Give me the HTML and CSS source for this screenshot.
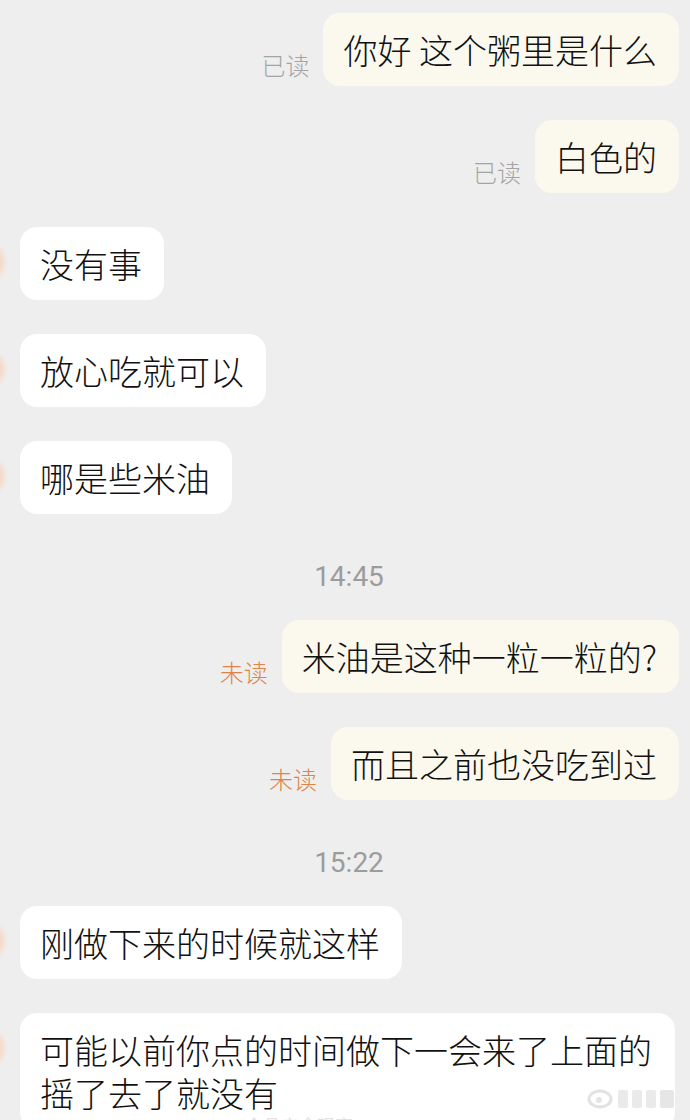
FILE: index.html
```html
<!DOCTYPE html>
<html lang="zh-CN">
<head>
<meta charset="utf-8">
<title>聊天</title>
<link rel="stylesheet" href="styles.css">
</head>
<body>
<div class="chat">
  <div class="row mine">
    <span class="status read">已读</span>
    <div class="bubble cream">你好 这个粥里是什么</div>
  </div>
  <div class="row mine">
    <span class="status read">已读</span>
    <div class="bubble cream">白色的</div>
  </div>
  <div class="row theirs">
    <span class="avatar"></span>
    <div class="bubble white">没有事</div>
  </div>
  <div class="row theirs">
    <span class="avatar"></span>
    <div class="bubble white">放心吃就可以</div>
  </div>
  <div class="row theirs">
    <span class="avatar"></span>
    <div class="bubble white">哪是些米油</div>
  </div>
  <div class="time">14:45</div>
  <div class="row mine after-time">
    <span class="status unread">未读</span>
    <div class="bubble cream">米油是这种一粒一粒的?</div>
  </div>
  <div class="row mine">
    <span class="status unread">未读</span>
    <div class="bubble cream">而且之前也没吃到过</div>
  </div>
  <div class="time">15:22</div>
  <div class="row theirs after-time">
    <span class="avatar"></span>
    <div class="bubble white">刚做下来的时候就这样</div>
  </div>
  <div class="row theirs">
    <span class="avatar"></span>
    <div class="bubble white">可能以前你点的时间做下一会来了上面的摇了去了就没有</div>
  </div>
</div>
<div class="watermark">
  <span class="wm-name">@食品安全观察</span>
  <svg class="wm-logo" width="96" height="28" viewBox="0 0 96 28">
    <ellipse cx="14" cy="15" rx="11" ry="8" fill="none" stroke="#d6d6d6" stroke-width="3"/>
    <circle cx="13" cy="16" r="3" fill="#dadada"/>
    <rect x="32" y="6" width="10" height="18" rx="2" fill="#e2e2e2"/>
    <rect x="46" y="6" width="10" height="18" rx="2" fill="#e2e2e2"/>
    <rect x="60" y="6" width="10" height="18" rx="2" fill="#e2e2e2"/>
    <rect x="74" y="6" width="14" height="18" rx="2" fill="#dcdcdc"/>
  </svg>
</div>
</body>
</html>
```

FILE: styles.css
```css
html, body {
  margin: 0;
  padding: 0;
}
body {
  background: #eeeeee;
  width: 690px;
  height: 1120px;
  overflow: hidden;
  position: relative;
  font-family: "Noto Sans CJK SC", "Noto Sans", sans-serif;
  color: #111111;
}
.chat {
  display: flex;
  flex-direction: column;
  padding-top: 13px;
}
.row {
  display: flex;
  margin-bottom: 34px;
}
.row.mine {
  justify-content: flex-end;
  align-items: flex-end;
  padding-right: 11px;
}
.row.theirs {
  justify-content: flex-start;
  align-items: flex-start;
  padding-right: 15px;
}
.row.after-time {
  margin-top: 28px;
}
.bubble {
  font-size: 34px;
  font-weight: 300;
  line-height: 43px;
  padding: 15px 22px 15px 20px;
  border-radius: 17px;
  min-width: 0;
}
.bubble.cream {
  background: #fbf9ee;
}
.bubble.white {
  background: #ffffff;
}
.status {
  font-size: 24px;
  font-weight: 300;
  line-height: 30px;
  margin-right: 14px;
  margin-bottom: 6px;
  flex-shrink: 0;
}
.status.read {
  color: #a4a4a4;
}
.status.unread {
  color: #de8447;
}
.avatar {
  flex-shrink: 0;
  width: 40px;
  height: 40px;
  border-radius: 50%;
  margin-left: -35px;
  margin-right: 15px;
  margin-top: 15px;
  background: radial-gradient(circle at 60% 50%, #f6c4a6 0%, #f8dccb 55%, #f0e6e2 100%);
  filter: blur(2px);
  opacity: 0.8;
}
.time {
  text-align: center;
  font-family: Roboto, "Liberation Sans", sans-serif;
  font-size: 28px;
  line-height: 30px;
  color: #9c9c9c;
  margin-top: 14px;
  margin-left: 8px;
}
.watermark {
  position: absolute;
  left: 0;
  right: 0;
  bottom: 0;
  height: 40px;
  pointer-events: none;
}
.wm-name {
  position: absolute;
  left: 228px;
  top: 36px;
  font-size: 18px;
  line-height: 18px;
  color: rgba(170, 170, 170, 0.35);
}
.wm-logo {
  position: absolute;
  right: 8px;
  top: 4px;
  opacity: 0.7;
}
```
